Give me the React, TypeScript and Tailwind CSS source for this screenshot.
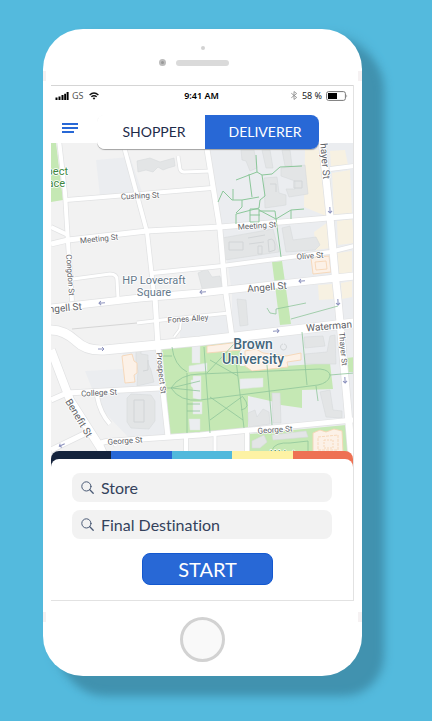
import { useState } from "react";

const roads: { d: string; w: number }[] = [
  { d: "M59 140 L65 193 L68 243 L72 301", w: 4 },
  { d: "M66 200 L140 194 L212 188", w: 4 },
  { d: "M51 244 L68 240 L147 231 L220 227 L354 216", w: 5 },
  { d: "M51 227 L68 235", w: 4 },
  { d: "M123 143 L147 232 L154 295", w: 4 },
  { d: "M155 297 L158 347 L168 437", w: 5 },
  { d: "M206 143 L220 230 L225 287 L232 337", w: 5 },
  { d: "M153 273 L222 266 L330 252 L354 246", w: 4 },
  { d: "M73 279 L110 274 Q117 274 117 280 L118 298", w: 3 },
  { d: "M178 156 L180 169 Q181 172 184 172 L210 171", w: 3 },
  { d: "M51 308 L140 298 L200 293 L354 276", w: 7 },
  { d: "M137 323 L162 320 L229 313", w: 3 },
  { d: "M181 320 L180 329 L174 337", w: 2 },
  { d: "M51 330 Q64 330 76 341 Q86 351 104 350 L200 341 L354 323", w: 9 },
  { d: "M322 140 L330 217 L335 273 L338 300 L347 400 L352 460", w: 7 },
  { d: "M330 169 L354 166", w: 4 },
  { d: "M51 400 L67 393 L160 388", w: 5 },
  { d: "M51 350 L70 400 L100 447 L106 460", w: 8 },
  { d: "M97 396 Q100 413 110 424", w: 4 },
  { d: "M100 444 Q103 441 112 441 L200 435 L354 420", w: 5 },
  { d: "M51 450 L84 434", w: 5 },
  { d: "M112 440 L116 446", w: 3 },
  { d: "M186 436 V460", w: 4 },
  { d: "M215 434 V460", w: 3 },
  { d: "M247 431 V460", w: 4 },
];

const parks = [
  "M51 143 H56 L63 200 L51 202 Z",
  "M162 348 L240 341 V366 L285 366 L330 363 L333 389 L302 390 V408 L281 405 L275 402 L248 396 V432 L170 434 Z",
  "M272 262 L282 261 L291 324 L280 325 Z",
  "M250 434 L346 425 L350 460 H250 Z",
  "M347 358 L354 357 V372 L348 372 Z",
];

const buildings = [
  "M137 161 L150 158 L160 162 L174 158 L175 166 L168 168 L163 170 L158 167 L153 172 L146 170 L138 172 Z",
  "M241 150 H254 L257 168 L250 171 L246 161 L242 160 Z",
  "M262 150 H270 L273 168 H266 Z",
  "M282 150 H290 L292 166 H285 Z",
  "M264 178 L277 177 L279 193 L286 195 V205 L265 208 Z",
  "M281 168 L305 165 L308 194 L289 197 L286 189 H295 V181 L281 176 Z",
  "M222 238 L273 229 L279 252 L225 260 Z",
  "M282 228 L290 226 L293 240 L316 237 L320 245 L315 250 L286 252 Z",
  "M198 273 L207 269 L212 277 L220 276 L223 290 L203 292 Z",
  "M237 299 L246 300 L248 325 L240 326 Z",
  "M136 349 H141 V354 L148 355 V363 L151 370 L154 382 L137 386 L138 371 L136 361 Z",
  "M127 398 L131 394 L151 395 L155 401 V421 L149 429 L131 428 L127 422 Z",
  "M304 337 L323 336 L325 346 L305 348 Z",
  "M305 354 L327 352 L330 336 L335 335 L336 364 L305 364 Z",
  "M320 392 L330 390 L333 410 L342 411 V418 L326 417 Z",
  "M248 413 L255 410 L257 417 L263 409 L269 412 L270 424 L249 427 Z",
  "M272 393 L280 393 L281 423 L273 423 Z",
  "M252 441 L264 435 L267 442 L260 448 H252 Z",
  "M272 435 L306 431 L308 437 L273 440 Z",
];

const lawnBuildings = [
  "M192 345 L200 344 V363 L192 363 Z",
  "M189 366 L207 363 V371 L189 372 Z",
  "M193 376 H201 V400 L193 398 V388 L191 386 V380 H193 Z",
  "M193 402 H202 V414 H193 Z",
  "M189 419 H200 V430 H190 Z",
  "M240 379 L263 378 V387 L240 389 Z",
];

const paths = [
  "M256 155 L257 172 L236 180 M257 172 L262 175 L272 174 L280 167 L302 166",
  "M249 174 L252 197 M262 175 L265 196 L260 200 L259 208 L236 214 V224 M218 202 L223 191 L232 200 H242 L259 197",
  "M233 189 V200 M242 200 V207 L236 213 M250 209 V222 H259 V209 Z M250 215 H260 M259 210 L276 219 L291 210 L304 209 M259 211 H275 L281 257 M291 210 V219",
];

const lawnPaths = [
  "M172 347 Q174 365 187 372 M162 356 H172 M161 388 H171 M171 388 Q180 374 200 374 L320 369 Q330 370 330 376 Q328 383 318 385 L200 400 Q180 402 171 388",
  "M187 373 V433 M171 388 L200 381 M171 388 L200 391",
  "M204 347 L210 433 M236 360 L244 428 M267 365 L272 425 M302 332 L307 385 M207 373 L234 344 M210 360 L238 376 M210 397 L243 420 M210 420 L243 396 M330 375 L354 373 M316 386 L318 401 M243 397 Q252 408 241 410 M187 404 H200 M187 411 H200",
  "M267 308 L270 313 L276 314 V309 L306 303 M291 319 L338 306 M272 450 Q275 442 290 443 L308 441 V459",
];

const streetLabels = [
  { t: "Cushing St", x: 140, y: 196, r: -3, s: 8 },
  { t: "Meeting St", x: 99, y: 239, r: -6, s: 8 },
  { t: "Meeting St", x: 257, y: 226, r: -4, s: 8 },
  { t: "Olive St", x: 310, y: 256, r: -4, s: 8 },
  { t: "Fones Alley", x: 188, y: 319, r: -4, s: 8 },
  { t: "Congdon St", x: 70, y: 275, r: 86, s: 8 },
  { t: "Prospect St", x: 161, y: 373, r: 84, s: 8 },
  { t: "College St", x: 99, y: 393, r: -3, s: 8 },
  { t: "George St", x: 125, y: 441, r: -4, s: 8 },
  { t: "George St", x: 275, y: 430, r: -4, s: 8 },
  { t: "Thayer St", x: 343, y: 349, r: 85, s: 8 },
  { t: "Thayer St", x: 325, y: 158, r: 85, s: 10 },
  { t: "Angell St", x: 267, y: 287, r: -5, s: 10 },
  { t: "Angell St", x: 62, y: 308, r: -5, s: 10 },
  { t: "Waterman", x: 329, y: 326, r: -5, s: 10 },
  { t: "Benefit St", x: 79, y: 418, r: 59, s: 10 },
];

const arrows = [
  { x: 203, y: 292, r: 175 },
  { x: 302, y: 281, r: 175 },
  { x: 102, y: 303, r: 175 },
  { x: 101, y: 349, r: 0 },
  { x: 276, y: 331, r: -5 },
  { x: 330, y: 210, r: 87 },
  { x: 338, y: 302, r: 87 },
  { x: 345, y: 380, r: 87 },
  { x: 62, y: 445, r: 155 },
];

function CampusMap() {
  return (
    <svg
      viewBox="51 143 302 316"
      preserveAspectRatio="xMidYMid slice"
      className="block h-[316px] w-full font-[Roboto,sans-serif]"
      role="img"
      aria-label="Map around Brown University"
    >
      <rect x="51" y="143" width="303" height="317" fill="#f2f2f2" />
      <path
        fill="#ebedf0"
        d="M96 160 L130 157 L142 192 L100 196 Z M207 143 H354 V460 H250 V343 L180 345 V320 L232 312 V292 L222 228 Z M85 371 L123 369 V352 L158 349 L166 437 L130 439 L107 415 L95 396 Z"
      />
      <path
        fill="#f7f1e2"
        d="M305 150 H319 L326 216 L304 207 Z M330 151 L345 150 L348 165 L331 167 Z M332 173 L350 170 L352 213 L334 215 Z M314 232 L328 222 L331 248 L316 250 Z M337 221 L352 219 L354 243 L338 245 Z M337 253 L352 251 V273 L339 275 Z M318 285 L332 284 L334 299 L319 300 Z M341 283 L352 281 V297 L342 299 Z"
      />
      {parks.map((d) => (
        <path key={d} d={d} fill="#c5e8b4" />
      ))}
      <path d="M248 397 L275 403 L273 428 L248 430 Z" fill="#ebedf0" />
      <g fill="#e3e5e6" stroke="#d7dadc" strokeWidth="0.6">
        {buildings.map((d) => (
          <path key={d} d={d} />
        ))}
      </g>
      <path
        d="M134 400 H144 V422 H134 Z M229 242 H243 V250 H229 Z M248 238 L265 235 M249 244 L264 242 M258 246 H262 V254 H258 Z M268 240 Q276 236 275 250 L269 252 Z M283 344 A3 3 0 1 0 284 344 M294 181 H302 V188 H294 Z M270 184 H276 V192 M148 360 V370 L143 371"
        fill="none"
        stroke="#d2d5d7"
      />
      <g fill="#ebedf0" stroke="#dfe8df" strokeWidth="0.5">
        {lawnBuildings.map((d) => (
          <path key={d} d={d} />
        ))}
      </g>
      <g fill="#fcf1e7" stroke="#f6d6b6" strokeWidth="0.9">
        <path d="M122 356 L132 354 L134 361 L137 363 V373 L134 375 L135 382 L125 383 Z" />
        <path d="M207 346 L240 342 L241 350 L207 353 Z" />
        <path d="M245 351 L256 349 L263 353 L286 356 L301 353 V360 L287 362 L288 367 L252 371 L245 366 Z" />
        <path d="M311 258 L329 256 L331 272 L313 274 Z" />
        <path d="M315 262 L326 261 L327 269 L316 270 Z" />
        <path d="M313 433 L320 430 L326 432 L334 429 L342 431 L343 452 H313 Z" />
        <path d="M318 437 L338 435 V450 H318 Z" strokeDasharray="3 1" />
        <path d="M324 440 H333 V448 H324 Z" strokeDasharray="2 1" />
      </g>
      <path d="M72 329 L137 323" stroke="#d6d6d6" fill="none" />
      <g fill="none" stroke="#e1e2e3">
        {roads.map((road) => (
          <path key={road.d} d={road.d} strokeWidth={road.w + 1.4} />
        ))}
      </g>
      <g fill="none" stroke="#ffffff">
        {roads.map((road) => (
          <path key={road.d} d={road.d} strokeWidth={road.w} />
        ))}
      </g>
      <g fill="none" stroke="#8cc79a">
        {paths.map((d) => (
          <path key={d} d={d} />
        ))}
      </g>
      <g fill="none" stroke="#8fc59a" strokeWidth="0.8">
        {lawnPaths.map((d) => (
          <path key={d} d={d} />
        ))}
      </g>
      {arrows.map((a) => (
        <path
          key={`${a.x}-${a.y}`}
          d="M-3 0 H3 M1 -2 L3 0 L1 2"
          fill="none"
          stroke="#8c92bd"
          transform={`translate(${a.x} ${a.y}) rotate(${a.r})`}
        />
      ))}
      <g
        fill="#5f6368"
        stroke="#ffffff"
        strokeWidth="1.6"
        strokeLinejoin="round"
        paintOrder="stroke"
        textAnchor="middle"
      >
        {streetLabels.map((l) => (
          <text
            key={`${l.t}-${l.x}`}
            fontSize={l.s}
            dominantBaseline="central"
            transform={`translate(${l.x} ${l.y}) rotate(${l.r})`}
          >
            {l.t}
          </text>
        ))}
        <g fill="#64788a" fontSize="11">
          <text x="154" y="284">HP Lovecraft</text>
          <text x="154" y="296">Square</text>
        </g>
        <g fill="#44677c" fontSize="14" fontWeight="500">
          <text x="253" y="349">Brown</text>
          <text x="253" y="364">University</text>
        </g>
        <g fill="#3d8640" fontSize="11" textAnchor="end">
          <text x="68" y="175">Prospect</text>
          <text x="65" y="187">Terrace</text>
        </g>
        <text x="289" y="458" fontSize="11" fill="#3d8640">Wriston</text>
      </g>
    </svg>
  );
}

function SignalIcon() {
  return (
    <svg viewBox="0 0 14 8" className="h-2 w-[14px]" aria-hidden="true">
      <path d="M0.5 5.5h2V8h-2z M3.5 4.5h2V8h-2z M6.5 3h2v5h-2z M9.2 1.8h1.8V8H9.2z M11.6 0h2v8h-2z" fill="#000" />
    </svg>
  );
}

function WifiIcon() {
  return (
    <svg viewBox="0 0 10 8" className="ml-[5px] h-2 w-[10px]" aria-hidden="true">
      <path d="M0.6 3 Q5 -1 9.4 3 M2.3 4.8 Q5 2.6 7.7 4.8" fill="none" stroke="#111" strokeWidth="1.4" />
      <path d="M3.6 6.1 Q5 5 6.4 6.1 L5 7.7 Z" fill="#111" />
    </svg>
  );
}

function StatusBar() {
  return (
    <div className="grid h-5 grid-cols-[1fr_auto_1fr] items-center border-t border-[#d5d5d5] pr-[5px] pl-1 font-['Noto_Sans',sans-serif] text-[9px] leading-none text-[#222]">
      <div className="flex items-center">
        <SignalIcon />
        <span className="ml-[3px] text-[#555]">GS</span>
        <WifiIcon />
      </div>
      <span className="font-semibold text-black">9:41 AM</span>
      <div className="flex items-center justify-end">
        <svg viewBox="0 0 8 10" className="mr-1 h-[9px] w-2" aria-hidden="true">
          <path d="M1 2.5 L7 7.2 L4 9.4 V0.6 L7 2.8 L1 7.5" fill="none" stroke="#888" strokeWidth="0.9" />
        </svg>
        <span>58 %</span>
        <svg viewBox="0 0 22 10" className="ml-1 h-[10px] w-[22px]" aria-hidden="true">
          <rect x="0.6" y="0.6" width="18.8" height="8.8" rx="2" fill="#fff" stroke="#777" />
          <rect x="2" y="2" width="9" height="6" fill="#000" />
          <path d="M20.5 3.5 Q22 5 20.5 6.5 Z" fill="#777" />
        </svg>
      </div>
    </div>
  );
}

function SearchField({ id, label }: { id: string; label: string }) {
  return (
    <div className="flex h-[29px] items-center gap-[7px] rounded-lg bg-[#f2f2f2] px-[9px]">
      <label htmlFor={id} aria-label={label}>
        <svg viewBox="0 0 13 13" className="h-[13px] w-[13px]" fill="none" stroke="#4a5a75" strokeLinecap="round">
          <circle cx="5.4" cy="5.4" r="4.6" />
          <path d="M8.8 8.8 L12.2 12.2" strokeWidth="1.3" />
        </svg>
      </label>
      <input
        id={id}
        type="text"
        placeholder={label}
        className="min-w-0 flex-1 bg-transparent text-base leading-5 text-[#34425c] outline-none [font-variant-ligatures:none] placeholder:text-[#34425c]"
      />
    </div>
  );
}

const stripes = ["bg-[#14233c]", "bg-[#2868d6]", "bg-[#50b9dc]", "bg-[#fdf2a4]", "bg-[#ee7153]"];

export default function App() {
  const [mode, setMode] = useState<"shopper" | "deliverer">("deliverer");
  const tab = (active: boolean) =>
    active ? "bg-[#2868d6] text-white" : "bg-white text-[#1d2b4a]";

  return (
    <main className="min-h-screen bg-[#54badd] pt-[29px] pr-[70px] pb-[46px] pl-[43px] font-[Lato,sans-serif]">
      <div className="relative rounded-[40px] bg-white px-2 shadow-[22px_20px_10px_0_#4192af,12px_8px_12px_0_#4192af]">
        <span className="absolute top-[42px] left-0 h-[10px] w-[3px] bg-[#f5f1f2]" />
        <span className="absolute top-[42px] right-0 h-[10px] w-1 bg-[#f5f1f2]" />
        <span className="absolute bottom-[54px] left-0 h-[10px] w-[3px] bg-[#f5f1f2]" />
        <span className="absolute right-0 bottom-[54px] h-[10px] w-1 bg-[#f5f1f2]" />

        <div className="flex h-14 flex-col items-center pt-[17px]">
          <span className="h-1 w-1 rounded-full bg-[#d2d2d2]" />
          <div className="mt-[9px] grid w-full grid-cols-[1fr_auto_1fr] items-center gap-[10px]">
            <span className="h-[7px] w-[7px] justify-self-end rounded-full border-2 border-[#bcbcbc] bg-[#999]" />
            <span className="h-[6px] w-[53px] rounded-full bg-[#dadada]" />
          </div>
        </div>

        <div className="border-r border-b border-[#e2e2e2]">
          <StatusBar />
          <header className="relative z-10 flex h-[38px] items-start pt-[10px] pl-[11px]">
            <button type="button" aria-label="Menu" className="mt-2 mr-[19px] flex w-4 flex-col gap-[2px]">
              <span className="h-[2px] w-full bg-[#2868d6]" />
              <span className="h-[2px] w-full bg-[#2868d6]" />
              <span className="h-[2px] w-3 bg-[#2868d6]" />
            </button>
            <div className="mr-[34px] flex h-[34px] flex-1 overflow-hidden rounded-lg text-sm shadow-[0_1px_1px_#a0a0a0] [clip-path:inset(0_0_-3px_0)]">
              <button
                type="button"
                aria-pressed={mode === "shopper"}
                onClick={() => setMode("shopper")}
                className={`w-[108px] pl-[6px] ${tab(mode === "shopper")}`}
              >
                SHOPPER
              </button>
              <button
                type="button"
                aria-pressed={mode === "deliverer"}
                onClick={() => setMode("deliverer")}
                className={`flex-1 pl-[6px] ${tab(mode === "deliverer")}`}
              >
                DELIVERER
              </button>
            </div>
          </header>

          <CampusMap />

          <section className="relative -mt-2">
            <div className="flex h-4 overflow-hidden rounded-t-lg">
              {stripes.map((color) => (
                <span key={color} className={`flex-1 ${color}`} />
              ))}
            </div>
            <form
              className="relative -mt-2 flex flex-col gap-2 rounded-t-lg bg-white px-[21px] pt-[14px] pb-[15px]"
              onSubmit={(e) => e.preventDefault()}
            >
              <SearchField id="store" label="Store" />
              <SearchField id="destination" label="Final Destination" />
              <button
                type="submit"
                className="mt-[6px] ml-[70px] h-8 w-[131px] rounded-lg border border-[#1358cf] bg-[#2868d6] text-xl leading-none text-white"
              >
                START
              </button>
            </form>
          </section>
        </div>

        <div className="flex h-[75px] items-start justify-center pt-4">
          <button
            type="button"
            aria-label="Home"
            className="h-[45px] w-[45px] rounded-full border-[3px] border-[#d2d2d2] bg-[#f9f9f9]"
          />
        </div>
      </div>
    </main>
  );
}
